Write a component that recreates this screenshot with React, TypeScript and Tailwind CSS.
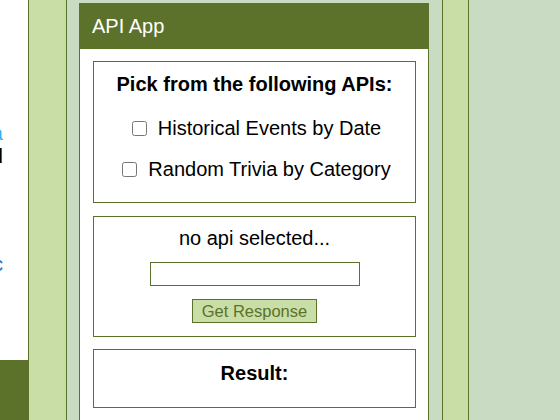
import React from 'react';

const apis = ['Historical Events by Date', 'Random Trivia by Category'];

function ApiOption({ label, first }: { label: string; first?: boolean }) {
  return (
    <label
      className={`flex h-[23px] items-center justify-center ${first ? 'mt-[21px]' : 'mt-[18px]'}`}
    >
      <input type="checkbox" className="m-0 ml-[4px] h-[15px] w-[15px]" />
      <span className="ml-[11px]">{label}</span>
    </label>
  );
}

export default function App() {
  return (
    <div
      className="flex h-[420px] w-[560px] overflow-hidden bg-[#c9dbc2] text-[20px] leading-[23px] text-black"
      style={{ fontFamily: '"Liberation Sans", Arial, sans-serif' }}
    >
      {/* left page strip, mostly scrolled out of view */}
      <div className="flex w-[29px] shrink-0 flex-col overflow-hidden border-r border-[#5c7129] bg-white">
        <div className="-ml-[297px] w-[300px] shrink-0 pt-[122px] text-right">
          <p className="text-[#3bb0f5]">events data</p>
          <p className="font-bold">selected</p>
          <p className="mt-[85px] text-[#1a6fd6]">topic</p>
        </div>
        <div className="mt-auto h-[60px] shrink-0 bg-[#5c7129]" />
      </div>

      <div className="w-[38px] shrink-0 border-r border-[#5c7129] bg-[#c9dea6]" />

      <div className="flex w-[376px] shrink-0 flex-col border-r border-[#5c7129] pl-[12px] pt-[3px]">
        <div className="flex w-[350px] flex-1 flex-col border-x border-[#5c7129] bg-white">
          <div className="flex h-[46px] shrink-0 items-center bg-[#5c7129] pl-[12px] text-[20px] text-white">
            API App
          </div>

          <div className="ml-[13px] mr-[12px] mt-[12px] border border-[#5c7129] pb-[21px] pt-[11px]">
            <p className="text-center font-bold">Pick from the following APIs:</p>
            {apis.map((a, i) => (
              <ApiOption key={a} label={a} first={i === 0} />
            ))}
          </div>

          <div className="ml-[13px] mr-[12px] mt-[13px] flex flex-col items-center border border-[#5c7129] pb-[13px] pt-[10px]">
            <p>no api selected...</p>
            <input
              type="text"
              className="mt-[12px] h-[24px] w-[210px] border border-[#5c7129] bg-white px-1 outline-none"
            />
            <button
              type="button"
              className="mt-[13px] h-[24px] border border-[#5c7129] bg-[#c9dea6] px-[9px] text-[16.5px] leading-[20px] text-[#5c7129]"
            >
              Get Response
            </button>
          </div>

          <div className="ml-[13px] mr-[12px] mt-[12px] border border-[#5c7129] pb-[22px] pt-[12px]">
            <p className="text-center font-bold">Result:</p>
          </div>
        </div>
      </div>

      <div className="w-[26px] shrink-0 border-r border-[#5c7129] bg-[#c9dea6]" />

      <div className="flex-1" />
    </div>
  );
}
